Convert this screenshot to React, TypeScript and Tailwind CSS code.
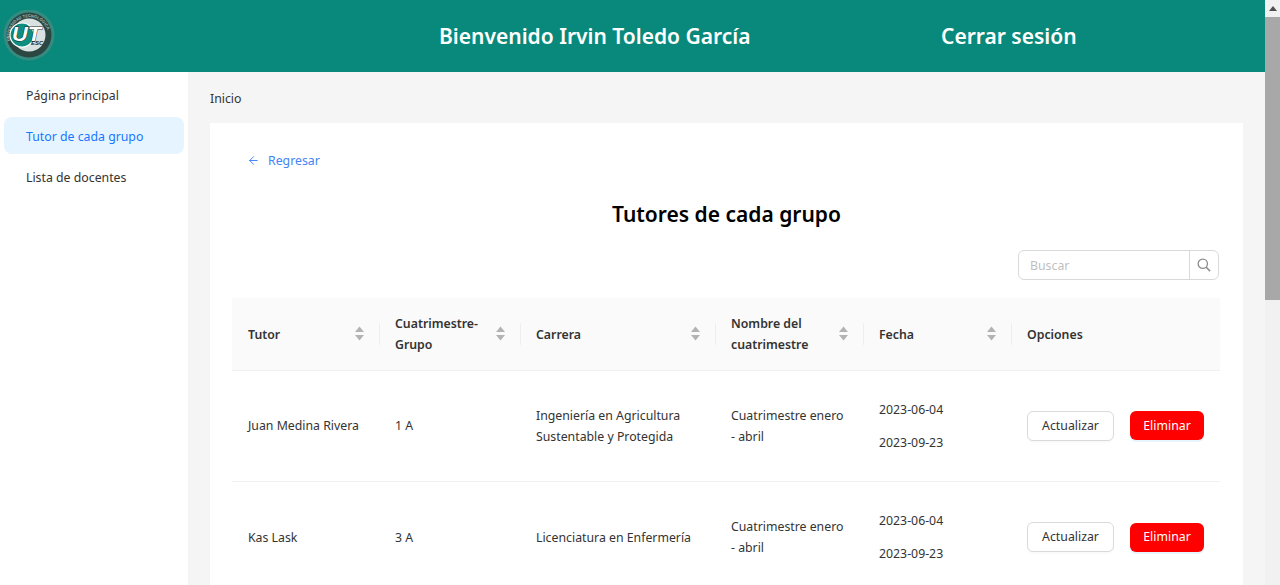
import { ArrowLeft } from "lucide-react";

const font = "font-['Noto_Sans',sans-serif]";

const rows = [
  { tutor: "Juan Medina Rivera", grupo: "1 A", carrera: "Ingeniería en Agricultura Sustentable y Protegida", height: "h-[111px]" },
  { tutor: "Kas Lask", grupo: "3 A", carrera: "Licenciatura en Enfermería", height: "h-[112px]" },
];

function Logo() {
  return (
    <svg width="52" height="52" viewBox="0 0 52 52" className="shrink-0">
      <circle cx="26" cy="25" r="25.5" fill="#6d8f88" opacity="0.45" />
      <circle cx="26" cy="25" r="22.5" fill="#2c4642" />
      <path id="logo-ring" d="M7 31 A19.5 19.5 0 1 1 45 31" fill="none" />
      <text fontSize="4" fontWeight="700" fill="#a8bbb6" fontFamily="Liberation Sans, sans-serif">
        <textPath href="#logo-ring">UNIVERSIDAD TECNOLÓGICA</textPath>
      </text>
      <circle cx="26" cy="25" r="16.5" fill="#d9e2e0" />
      <circle cx="19" cy="25" r="12" fill="#0d8e80" stroke="#ffffff" strokeWidth="1.2" />
      <text x="9" y="31" fontSize="21" fontWeight="700" fontStyle="italic" fill="#ffffff" stroke="#1c2a28" strokeWidth="0.9" paintOrder="stroke" fontFamily="Liberation Sans, sans-serif" textLength="29" lengthAdjust="spacingAndGlyphs">
        UT
      </text>
      <text x="28" y="35" fontSize="6" fontWeight="700" fontStyle="italic" fill="#1c2a28" fontFamily="Liberation Sans, sans-serif">
        ESC
      </text>
    </svg>
  );
}

function SortIcon() {
  return (
    <svg width="9" height="15" viewBox="0 0 9 15" className="shrink-0">
      <path d="M4.5 0.5 L9 6 H0 Z" fill="#b3b3b3" />
      <path d="M4.5 14.5 L9 9 H0 Z" fill="#b3b3b3" />
    </svg>
  );
}

function SearchIcon() {
  return (
    <svg width="14" height="14" viewBox="0 0 15 15" fill="none" stroke="#8c8c8c" strokeWidth="1.4">
      <circle cx="6.2" cy="6.2" r="5" />
      <path d="M9.9 9.9 L14 14" strokeWidth="1.7" />
    </svg>
  );
}

function HeadCell({ label, width, sort = true, last = false, first = false }: { label: React.ReactNode; width: string; sort?: boolean; last?: boolean; first?: boolean }) {
  return (
    <th className={`${width} ${first ? "pl-[16px]" : "pl-[15px]"} relative p-0 pr-4 text-left font-semibold`}>
      <div className="flex items-center justify-between">
        <span className="pt-[1px] leading-[21px]">{label}</span>
        {sort && <SortIcon />}
      </div>
      {!last && <span className="absolute top-1/2 right-0 h-[22px] w-px -translate-y-1/2 bg-[#efefef]" />}
    </th>
  );
}

export default function App() {
  return (
    <div className={`${font} flex h-[585px] overflow-hidden text-[12.3px] text-[#333333]`}>
      <div className="flex min-w-0 flex-1 flex-col">
        <header className="flex h-[72px] shrink-0 items-center bg-[#08897b] text-[21px] font-semibold text-white">
          <div className="w-[439px] pl-[3px]">
            <Logo />
          </div>
          <span className="w-[502px] pt-[2px]">Bienvenido Irvin Toledo García</span>
          <span className="pt-[2px]">Cerrar sesión</span>
        </header>

        <div className="flex min-h-0 flex-1">
          <aside className="flex w-[188px] shrink-0 flex-col gap-[4px] bg-white px-1 pt-1">
            <a className="flex h-[37px] items-center rounded-lg pt-[3px] pl-[22px]">Página principal</a>
            <a className="flex h-[37px] items-center rounded-lg bg-[#e6f4ff] pt-[3px] pl-[22px] text-[#1677ff]">Tutor de cada grupo</a>
            <a className="flex h-[37px] items-center rounded-lg pt-[3px] pl-[22px]">Lista de docentes</a>
          </aside>

          <main className="min-w-0 flex-1 bg-[#f5f5f5] px-[22px]">
            <div className="flex h-[51px] items-center pt-[3px]">Inicio</div>
            <section className="bg-white px-[22px] pt-[27px] pb-8">
              <a className="flex items-center gap-[8px] pl-[15px] leading-[21px] text-[#4285f4]">
                <ArrowLeft size={13} strokeWidth={1.8} />
                Regresar
              </a>
              <h1 className="mt-[26px] text-center text-[21px] leading-[34px] font-semibold text-black">Tutores de cada grupo</h1>
              <div className="mt-[19px] flex justify-end pr-[2px]">
                <div className="flex h-[30px] w-[201px] items-center rounded-md border border-[#d9d9d9]">
                  <span className="flex-1 pt-[2px] pl-[11px] text-[#bfbfbf]">Buscar</span>
                  <span className="flex h-full w-[29px] items-center justify-center border-l border-[#d9d9d9]">
                    <SearchIcon />
                  </span>
                </div>
              </div>

              <table className="mt-[18px] w-[988px] table-fixed border-collapse">
                <thead>
                  <tr className="h-[72px] border-b border-[#f0f0f0] bg-[#fafafa]">
                    <HeadCell width="w-[148px]" label="Tutor" first />
                    <HeadCell width="w-[141px]" label={<>Cuatrimestre-<br />Grupo</>} />
                    <HeadCell width="w-[195px]" label="Carrera" />
                    <HeadCell width="w-[148px]" label={<>Nombre del<br />cuatrimestre</>} />
                    <HeadCell width="w-[148px]" label="Fecha" />
                    <HeadCell width="w-[208px]" label="Opciones" sort={false} last />
                  </tr>
                </thead>
                <tbody>
                  {rows.map((row) => (
                    <tr key={row.tutor} className={`${row.height} border-b border-[#f0f0f0]`}>
                      <td className="p-0 pt-[2px] pl-[16px]">{row.tutor}</td>
                      <td className="p-0 pt-[2px] pl-[15px]">{row.grupo}</td>
                      <td className="p-0 pr-4 pl-[15px] leading-[21px]">{row.carrera}</td>
                      <td className="p-0 pr-4 pl-[15px] leading-[21px]">Cuatrimestre enero - abril</td>
                      <td className="p-0 pl-[15px] leading-[21px]">
                        <div className="flex flex-col gap-3">
                          <span>2023-06-04</span>
                          <span>2023-09-23</span>
                        </div>
                      </td>
                      <td className="p-0 pl-[15px]">
                        <div className="flex items-center gap-4">
                          <button className="h-[30px] w-[87px] rounded-md border border-[#d9d9d9] bg-white pt-[1px] shadow-[0_2px_0_rgba(0,0,0,0.02)]">Actualizar</button>
                          <button className="h-[29px] w-[74px] rounded-md bg-[#ff0000] pt-[1px] text-white shadow-[0_2px_0_rgba(5,145,255,0.1)]">Eliminar</button>
                        </div>
                      </td>
                    </tr>
                  ))}
                </tbody>
              </table>
            </section>
          </main>
        </div>
      </div>

      <div className="flex w-[15px] shrink-0 flex-col bg-[#f1f1f1]">
        <div className="flex h-[17px] items-center justify-center">
          <svg width="8" height="5" viewBox="0 0 8 5"><path d="M4 0 L8 5 H0 Z" fill="#505050" /></svg>
        </div>
        <div className="h-[283px] bg-[#a8a8a8]" />
      </div>
    </div>
  );
}
